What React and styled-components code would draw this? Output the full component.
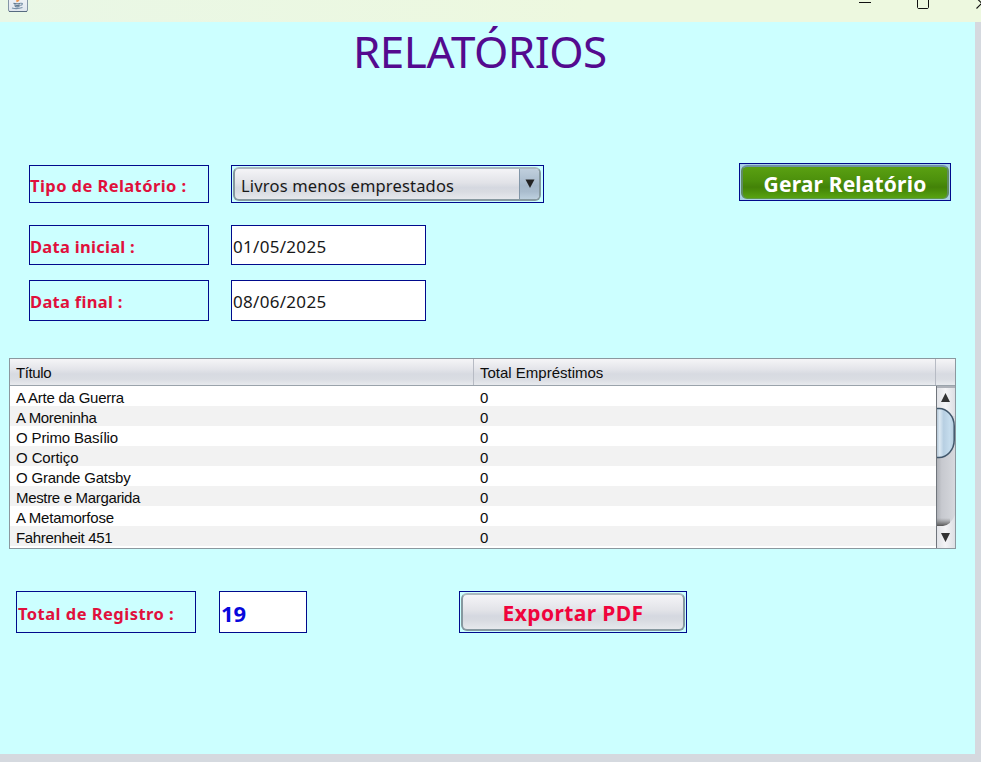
import React from "react";
import styled, { createGlobalStyle } from "styled-components";

const Global = createGlobalStyle`
  * { box-sizing: border-box; }
  html, body { margin: 0; padding: 0; }
  body { background: #d5d9df; overflow: hidden; }
`;

const ui = `"Noto Sans", "Open Sans", sans-serif`;
const steel = `linear-gradient(#f4f4f7 0%, #e2e3e8 45%, #d5d8e0 62%, #d8dbe1 75%, #e6e8ec 100%)`;

const Window = styled.div`
  width: 981px;
  height: 762px;
  overflow: hidden;
  background: #d5d9df;
  font-family: ${ui};
`;

const TitleBar = styled.header`
  height: 22px;
  display: flex;
  justify-content: space-between;
  background: linear-gradient(90deg, #e9f7e6, #edf8df 60%);
  svg { display: block; }
`;

const Content = styled.main`
  width: 975px;
  height: 732px;
  background: #ccffff;
`;

const Title = styled.h1`
  margin: 0;
  height: 143px;
  padding: 0 0 0 353px;
  font: 400 44px/58px ${ui};
  letter-spacing: ${(p) => p.$track}px;
  color: #540a8f;
`;

const FormRow = styled.div`
  display: flex;
  align-items: flex-start;
  height: ${(p) => p.$h}px;
  margin: 0 0 ${(p) => p.$gap}px ${(p) => p.$left || 29}px;
`;

const Box = styled.div`
  width: ${(p) => p.$w}px;
  height: 100%;
  margin-left: ${(p) => p.$ml || 0}px;
  border: 1px solid #000a8c;
  display: flex;
  align-items: center;
  white-space: nowrap;
`;

const Label = styled(Box)`
  padding: ${(p) => p.$pt || 0}px 0 0 ${(p) => p.$pl || 0}px;
  font-size: 16.5px;
  font-weight: 700;
  letter-spacing: ${(p) => p.$track}px;
  color: #e0103c;
`;

const Field = styled(Box)`
  background: #fff;
  padding: 2px 0 0 1px;
  font-size: 17px;
  letter-spacing: ${(p) => p.$track}px;
  color: #181818;
`;

const Count = styled(Field)`
  font-size: 22px;
  font-weight: 700;
  padding: 2px 0 0 1px;
  color: #0808dc;
`;

const Combo = styled(Box)`
  padding: 1px 2px 1px 1px;
`;

const ComboFace = styled.div`
  flex: 1;
  height: 100%;
  display: flex;
  border: 2px solid #86989f;
  border-top-color: #abb8be;
  border-radius: 6px;
  background: ${steel};
  overflow: hidden;
`;

const ComboText = styled.span`
  flex: 1;
  padding-left: 6px;
  font-size: 16.5px;
  line-height: 33px;
  letter-spacing: ${(p) => p.$track}px;
  color: #181818;
`;

const ComboArrow = styled.span`
  width: 20px;
  border-left: 1px solid #8296a8;
  background: linear-gradient(#c0cfdd, #a5b8ca 55%, #a9bccd 75%, #bdd0df);
  display: flex;
  justify-content: center;
  padding-top: 10px;
`;

const GreenSlot = styled.div`
  height: 38px;
  margin: -2px 0 0 195px;
`;

const ButtonFrame = styled(Box)`
  padding: 1px;
  background: ${(p) => p.$bg || "transparent"};
`;

const ButtonFace = styled.button`
  flex: 1;
  height: 100%;
  padding: ${(p) => p.$pt}px 0 0 0;
  border: 2px solid #86989f;
  border-top-color: #abb8be;
  border-radius: 6px;
  background: ${steel};
  font: 700 21px/26px ${ui};
  letter-spacing: ${(p) => p.$track}px;
  color: #f0033c;
`;

const GreenFace = styled(ButtonFace)`
  border-color: #6e93a5 #5f8a62 #5f9a4a;
  border-width: 2px 2px 1px;
  background: linear-gradient(#5aa012, #4c900c 45%, #438208 65%, #4a8e0a 78%, #58a312);
  color: #fff;
`;

const Table = styled.section`
  width: 947px;
  height: 191px;
  margin: 0 0 42px 9px;
  border: 1px solid #8b989f;
  display: flex;
  flex-direction: column;
  font: 15px/20px "Liberation Sans", Arial, sans-serif;
  color: #0c0c0c;
`;

const HeadRow = styled.div`
  height: 27px;
  display: grid;
  grid-template-columns: 464px 462px 1fr;
  background: linear-gradient(#f5f5f7, #e4e5ea 38%, #d7dae1 58%, #dadde3 78%, #e8eaee);
  border-bottom: 1px solid #9aa3ab;
`;

const HeadCell = styled.div`
  padding: 4px 6px 0;
  letter-spacing: ${(p) => p.$track || 0}px;
  border-right: ${(p) => (p.$last ? "0" : "1px solid #b7bbc4")};
`;

const TableBody = styled.div`
  flex: 1;
  min-height: 0;
  display: flex;
  background: #fff;
`;

const Rows = styled.div`
  flex: 1;
`;

const Row = styled.div`
  height: 20px;
  display: grid;
  grid-template-columns: 464px 1fr;
  background: ${(p) => (p.$odd ? "#f2f2f2" : "#fff")};
`;

const Cell = styled.div`
  padding: 2px 6px 0;
  letter-spacing: ${(p) => p.$track || 0}px;
`;

const ScrollBar = styled.div`
  width: 19px;
  svg { display: block; }
`;

const books = [
  { title: "A Arte da Guerra", track: -0.24 },
  { title: "A Moreninha", track: -0.35 },
  { title: "O Primo Basílio", track: -0.15 },
  { title: "O Cortiço", track: -0.1 },
  { title: "O Grande Gatsby", track: -0.2 },
  { title: "Mestre e Margarida", track: -0.33 },
  { title: "A Metamorfose", track: -0.24 },
  { title: "Fahrenheit 451", track: -0.33 },
];

const JavaIcon = () => (
  <svg width="30" height="14" viewBox="0 0 30 14">
    <defs>
      <linearGradient id="tile" x1="0" y1="0" x2="0" y2="1">
        <stop offset="0" stopColor="#f6f8fa" />
        <stop offset="1" stopColor="#dfe6ee" />
      </linearGradient>
    </defs>
    <rect x="8.5" y="-7" width="19" height="18.5" rx="1.5" fill="url(#tile)" stroke="#8495a6" />
    <path d="M9 11.5H27" stroke="#566b80" />
    <path d="M16.3 0.8Q18.6 0.5 17.6-1" stroke="#ef9550" strokeWidth="3" fill="none" />
    <path d="M13.5 3.4Q17 4.3 20.5 3.2M14.3 5.1Q17 6 20 5M14.8 6.5Q17.3 7.2 19.5 6.5" stroke="#60788f" strokeWidth="1.1" fill="none" />
    <path d="M20.5 3.3Q23.3 3 22 4.7L20.3 5.5M12 8Q17 9.4 22.5 7.5" stroke="#7890a8" strokeWidth="1.1" fill="none" />
  </svg>
);

const WindowControls = () => (
  <svg width="130" height="14" viewBox="851 0 130 14">
    <path d="M859 2.5H871" stroke="#111" />
    <path d="M917.5 -1V7.5L918.2 8.5H927.8L928.5 7.5V-1" stroke="#111" fill="none" />
    <path d="M976.5 8.5L987-2M976.5-2L987 8.5" stroke="#111" strokeWidth="1.1" fill="none" />
  </svg>
);

const ScrollArt = () => (
  <svg width="19" height="162" viewBox="0 0 19 162">
    <defs>
      <linearGradient id="track">
        <stop offset="0" stopColor="#a9acb2" />
        <stop offset="0.3" stopColor="#c7c9cf" />
        <stop offset="1" stopColor="#d6d8dd" />
      </linearGradient>
      <linearGradient id="cap">
        <stop offset="0" stopColor="#dfe1e5" />
        <stop offset="0.5" stopColor="#f4f4f6" />
        <stop offset="1" stopColor="#dddfe4" />
      </linearGradient>
      <linearGradient id="thumb">
        <stop offset="0" stopColor="#a3b8ca" />
        <stop offset="0.2" stopColor="#dce9f3" />
        <stop offset="0.42" stopColor="#b7cfe2" />
        <stop offset="0.75" stopColor="#c5dced" />
        <stop offset="1" stopColor="#b6cddd" />
      </linearGradient>
      <linearGradient id="shade" x1="0" y1="0" x2="0" y2="1">
        <stop offset="0" stopColor="#777" stopOpacity="0" />
        <stop offset="1" stopColor="#555" />
      </linearGradient>
    </defs>
    <rect width="19" height="162" fill="url(#track)" />
    <rect width="19" height="2" fill="#aeb2b9" />
    <rect y="2" width="19" height="28" fill="url(#cap)" />
    <rect y="132" width="14" height="8" fill="url(#shade)" />
    <path d="M0 140H7Q15 139 19 129V162H0Z" fill="url(#cap)" />
    <path d="M0 22.5H3C11 22.5 18.2 30 18.2 40V54C18.2 64 11 71.5 3 71.5H0Z" fill="url(#thumb)" />
    <path d="M0 22.5H3C11 22.5 18.2 30 18.2 40V54C18.2 64 11 71.5 3 71.5H0" fill="none" stroke="#41576b" strokeWidth="1.5" />
    <path d="M0.5 0V162" stroke="#70757c" />
    <path d="M9.5 7L14 16H5ZM9.5 156L14 147H5Z" fill="#333" />
  </svg>
);

export default function App() {
  return (
    <Window>
      <Global />
      <TitleBar>
        <JavaIcon />
        <WindowControls />
      </TitleBar>
      <Content>
        <Title $track={-0.5}>RELATÓRIOS</Title>
        <FormRow $h={38} $gap={22}>
          <Label $w={180} $pt={3} $track={0.42}>Tipo de Relatório :</Label>
          <Combo $w={313} $ml={22}>
            <ComboFace>
              <ComboText $track={0.18}>Livros menos emprestados</ComboText>
              <ComboArrow>
                <svg width="10" height="10" viewBox="0 0 10 10"><path d="M0.5 0.5H9.5L5 9Z" fill="#222" /></svg>
              </ComboArrow>
            </ComboFace>
          </Combo>
          <GreenSlot>
            <ButtonFrame $w={212} $bg="#a9cfe6">
              <GreenFace $pt={2} $track={0.17}>Gerar Relatório</GreenFace>
            </ButtonFrame>
          </GreenSlot>
        </FormRow>
        <FormRow $h={40} $gap={15}>
          <Label $w={180} $pt={3} $track={0.28}>Data inicial :</Label>
          <Field $w={195} $ml={22} $track={0.3}>01/05/2025</Field>
        </FormRow>
        <FormRow $h={41} $gap={37}>
          <Label $w={180} $pt={2} $track={0.3}>Data final :</Label>
          <Field $w={195} $ml={22} $track={0.3}>08/06/2025</Field>
        </FormRow>
        <Table>
          <HeadRow>
            <HeadCell $track={-0.4}>Título</HeadCell>
            <HeadCell>Total Empréstimos</HeadCell>
            <HeadCell $last />
          </HeadRow>
          <TableBody>
            <Rows>
              {books.map((book, i) => (
                <Row key={book.title} $odd={i % 2 === 1}>
                  <Cell $track={book.track}>{book.title}</Cell>
                  <Cell>0</Cell>
                </Row>
              ))}
            </Rows>
            <ScrollBar><ScrollArt /></ScrollBar>
          </TableBody>
        </Table>
        <FormRow $h={42} $gap={0} $left={16}>
          <Label $w={180} $pt={2} $pl={1} $track={0.47}>Total de Registro :</Label>
          <Count $w={88} $ml={23} $track={0}>19</Count>
          <ButtonFrame $w={228} $ml={152}>
            <ButtonFace $pt={2} $track={0.4}>Exportar PDF</ButtonFace>
          </ButtonFrame>
        </FormRow>
      </Content>
    </Window>
  );
}
